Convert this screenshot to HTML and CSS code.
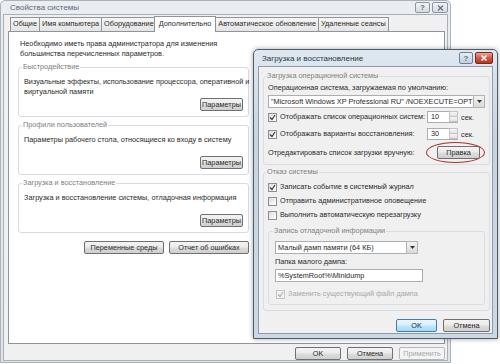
FILE: index.html
```html
<!DOCTYPE html>
<html lang="ru">
<head>
    <meta charset="UTF-8">
    <meta name="viewport" content="width=device-width, initial-scale=1.0">
    <title>Свойства системы</title>
    <link rel="stylesheet" href="styles.css">
</head>
<body>
<div class="desktop">

    <!-- main dialog -->
    <div class="window sysprops">
        <div class="titlebar">
            <span class="title">Свойства системы</span>
            <div class="caption">
                <span class="cap-btn">?</span>
                <span class="cap-btn cap-wide">
                    <svg width="7" height="6" viewBox="0 0 7 6"><path d="M1 0.5 L6 5.5 M6 0.5 L1 5.5" stroke="#66707a" stroke-width="1.2"/></svg>
                </span>
            </div>
        </div>
        <div class="client">
            <div class="tabs">
                <span class="tab">Общие</span>
                <span class="tab">Имя компьютера</span>
                <span class="tab">Оборудование</span>
                <span class="tab active">Дополнительно</span>
                <span class="tab">Автоматическое обновление</span>
                <span class="tab">Удаленные сеансы</span>
            </div>
            <div class="tab-panel">
                <p class="intro">Необходимо иметь права администратора для изменения<br>большинства перечисленных параметров.</p>

                <fieldset class="group">
                    <legend>Быстродействие</legend>
                    <div class="group-body">
                        <p>Визуальные эффекты, использование процессора, оперативной и<br>виртуальной памяти</p>
                        <button class="btn">Параметры</button>
                    </div>
                </fieldset>

                <fieldset class="group">
                    <legend>Профили пользователей</legend>
                    <div class="group-body">
                        <p>Параметры рабочего стола, относящиеся ко входу в систему</p>
                        <button class="btn">Параметры</button>
                    </div>
                </fieldset>

                <fieldset class="group">
                    <legend>Загрузка и восстановление</legend>
                    <div class="group-body">
                        <p>Загрузка и восстановление системы, отладочная информация</p>
                        <button class="btn">Параметры</button>
                    </div>
                </fieldset>

                <div class="panel-buttons">
                    <button class="btn btn-wide">Переменные среды</button>
                    <button class="btn btn-wide">Отчет об ошибках</button>
                </div>
            </div>
            <div class="dialog-buttons">
                <button class="btn">OK</button>
                <button class="btn">Отмена</button>
                <button class="btn" disabled>Применить</button>
            </div>
        </div>
    </div>

    <!-- startup and recovery dialog -->
    <div class="window startup">
        <div class="titlebar">
            <span class="title">Загрузка и восстановление</span>
            <div class="caption">
                <span class="cap-btn cap-help">?</span>
                <span class="cap-btn cap-close">
                    <svg width="8" height="6" viewBox="0 0 8 6"><path d="M1.5 0.5 L6.5 5.5 M6.5 0.5 L1.5 5.5" stroke="#fff" stroke-width="1.5"/></svg>
                </span>
            </div>
        </div>
        <div class="client">
            <fieldset class="box">
                <legend>Загрузка операционной системы</legend>
                <div class="field-label">Операционная система, загружаемая по умолчанию:</div>
                <div class="select">
                    <span class="val">"Microsoft Windows XP Professional RU" /NOEXECUTE=OPTIN /FASTDETECT</span>
                    <span class="drop"><svg width="5" height="3" viewBox="0 0 5 3"><path d="M0 0 H5 L2.5 3 Z" fill="#333"/></svg></span>
                </div>
                <div class="opt-row first">
                    <label class="check"><span class="cb"><svg width="7" height="7" viewBox="0 0 7 7"><path d="M1 3.5 L3 5.5 L6 1" fill="none" stroke="#3a3a3a" stroke-width="1.2"/></svg></span>Отображать список операционных систем:</label>
                    <span class="spin"><span class="num">10</span><span class="arrows"><i></i><i class="down"></i></span></span>
                    <span class="unit">сек.</span>
                </div>
                <div class="opt-row">
                    <label class="check"><span class="cb"><svg width="7" height="7" viewBox="0 0 7 7"><path d="M1 3.5 L3 5.5 L6 1" fill="none" stroke="#3a3a3a" stroke-width="1.2"/></svg></span>Отображать варианты восстановления:</label>
                    <span class="spin"><span class="num">30</span><span class="arrows"><i></i><i class="down"></i></span></span>
                    <span class="unit">сек.</span>
                </div>
                <div class="opt-row edit-row">
                    <span>Отредактировать список загрузки вручную:</span>
                    <span class="marked"><button class="btn">Правка</button></span>
                </div>
            </fieldset>

            <fieldset class="box failure">
                <legend>Отказ системы</legend>
                <label class="check line"><span class="cb"><svg width="7" height="7" viewBox="0 0 7 7"><path d="M1 3.5 L3 5.5 L6 1" fill="none" stroke="#3a3a3a" stroke-width="1.2"/></svg></span>Записать событие в системный журнал</label>
                <label class="check line"><span class="cb"></span>Отправить административное оповещение</label>
                <label class="check line"><span class="cb"></span>Выполнить автоматическую перезагрузку</label>

                <fieldset class="box debug">
                    <legend>Запись отладочной информации</legend>
                    <div class="select small">
                        <span class="val">Малый дамп памяти (64 КБ)</span>
                        <span class="drop"><svg width="5" height="3" viewBox="0 0 5 3"><path d="M0 0 H5 L2.5 3 Z" fill="#333"/></svg></span>
                    </div>
                    <div class="field-label">Папка малого дампа:</div>
                    <div class="textbox">%SystemRoot%\Minidump</div>
                    <label class="check line disabled"><span class="cb"><svg width="7" height="7" viewBox="0 0 7 7"><path d="M1 3.5 L3 5.5 L6 1" fill="none" stroke="#b0b0b0" stroke-width="1.2"/></svg></span>Заменить существующий файл дампа</label>
                </fieldset>
            </fieldset>

            <div class="dialog-buttons">
                <button class="btn btn-default">OK</button>
                <button class="btn">Отмена</button>
            </div>
        </div>
    </div>

</div>
</body>
</html>
```

FILE: styles.css
```css
body {
    margin: 0;
    background: #fff;
    font-family: "Liberation Sans", Arial, sans-serif;
    font-size: 7.3px;
    color: #2a2a2a;
}

.desktop {
    position: relative;
    width: 500px;
    height: 364px;
    overflow: hidden;
}

p {
    margin: 0;
    line-height: 10px;
}

/* window chrome */

.window {
    box-sizing: border-box;
    display: flex;
    flex-direction: column;
}

.titlebar {
    display: flex;
    align-items: center;
    justify-content: space-between;
}

.caption {
    display: flex;
    gap: 2px;
}

.cap-btn {
    display: flex;
    align-items: center;
    justify-content: center;
    box-sizing: border-box;
    width: 15px;
    height: 11px;
    border: 1px solid #8d96a0;
    border-radius: 2px;
    background: linear-gradient(#f1f3f6, #d5dbe1);
    color: #66707a;
    font-size: 8px;
    font-weight: bold;
}

.cap-wide {
    width: 16px;
}

.sysprops {
    width: 451px;
    height: 363px;
    border: 1px solid #aab2ba;
    border-radius: 5px 5px 0 0;
    background: linear-gradient(#eaedf1, #e0e4e9);
    padding: 0 2px 1px;
}

.sysprops .titlebar {
    height: 13px;
    padding-left: 7px;
}

.sysprops .title {
    font-size: 8px;
    color: #5b6b7c;
}

.sysprops .client {
    flex: 1;
    background: #f0f0f0;
    border: 1px solid #a8b0b8;
    padding: 2px 2px 0 4px;
}

/* tabs */

.tabs {
    display: flex;
    align-items: flex-end;
    height: 14px;
    padding-left: 2px;
}

.tab {
    box-sizing: border-box;
    height: 14px;
    padding: 0 2px;
    line-height: 12px;
    border: 1px solid #8e9499;
    border-bottom: none;
    margin-right: -1px;
    background: linear-gradient(#f6f6f6, #e4e4e4);
    white-space: nowrap;
}

.tab.active {
    position: relative;
    z-index: 1;
    height: 16px;
    margin: 0 -1px -1px -2px;
    padding: 0 4px;
    background: #fff;
    line-height: 13px;
}

.tab-panel {
    box-sizing: border-box;
    height: 313px;
    border: 1px solid #8e9499;
    background: #fff;
    padding: 7px 0 0 9px;
}

.intro {
    margin: 0 0 3px 2px;
}

.group {
    box-sizing: border-box;
    width: 231px;
    min-width: 0;
    margin: 0 0 3px;
    padding: 0 5px 5px 5px;
    border: 1px solid #d5dbe1;
    border-radius: 3px;
}

.group legend,
.box legend {
    padding: 0 1px;
    margin-left: -2px;
    line-height: 10px;
    color: #808080;
}

.group-body {
    display: flex;
    flex-direction: column;
    height: 34px;
    padding-top: 5px;
}

.group-body p {
    white-space: nowrap;
}

.group-body .btn {
    align-self: flex-end;
    margin-top: auto;
}

.panel-buttons {
    display: flex;
    justify-content: flex-end;
    gap: 5px;
    width: 231px;
    margin-top: 8px;
}

.dialog-buttons {
    display: flex;
    justify-content: flex-end;
    gap: 6px;
    margin-top: 3px;
}

/* buttons */

.btn {
    box-sizing: border-box;
    width: 46px;
    height: 13px;
    padding: 0;
    border: 1px solid #707070;
    border-radius: 2px;
    background: linear-gradient(#f3f3f3 0%, #ebebeb 48%, #dddddd 52%, #cfcfcf 100%);
    font: inherit;
    color: #2a2a2a;
    line-height: 11px;
}

.group-body .btn {
    width: 43px;
}

.btn-wide {
    width: 80px;
}

.btn:disabled {
    border-color: #b5b9bc;
    background: #f4f4f4;
    color: #a8a8a8;
}

.btn-default {
    border-color: #3c7fb1;
    background: linear-gradient(#eaf6fd 0%, #d9f0fc 48%, #bee6fd 52%, #a7d9f5 100%);
}

/* startup and recovery dialog */

.startup {
    position: absolute;
    left: 253px;
    top: 49px;
    width: 245px;
    height: 290px;
    border: 1px solid #4e5b69;
    border-radius: 5px 5px 0 0;
    background: linear-gradient(#dfe8f1, #c6d4e2 30%, #ccd9e5);
    padding: 0 4px 4px;
    box-shadow: 0 0 5px rgba(0, 0, 0, 0.35);
}

.startup .titlebar {
    height: 16px;
    padding-left: 4px;
}

.startup .title {
    font-size: 8px;
    color: #2c3640;
}

.cap-help {
    width: 14px;
    height: 12px;
    border-color: #6f8294;
    background: linear-gradient(#e6eef6, #bfcfdf);
}

.cap-close {
    width: 18px;
    height: 12px;
    border-color: #7a2a1e;
    background: linear-gradient(#eaa796, #cf5a43 50%, #b8321c);
}

.startup .client {
    flex: 1;
    background: #f0f0f0;
    border: 1px solid #8d9cab;
    padding: 4px 2px 0 4px;
    overflow: hidden;
}

.box {
    min-width: 0;
    margin: 0;
    padding: 0 4px 6px 4px;
    border: 1px solid #d8dde2;
    border-radius: 3px;
}

.field-label {
    margin-top: 2px;
    line-height: 10px;
}

.select {
    display: flex;
    box-sizing: border-box;
    height: 13px;
    margin-top: 2px;
    border: 1px solid #abadb3;
    background: #fff;
}

.select .val {
    flex: 1;
    min-width: 0;
    padding-left: 2px;
    line-height: 11px;
    white-space: nowrap;
    overflow: hidden;
}

.select .drop {
    display: flex;
    align-items: center;
    justify-content: center;
    width: 10px;
    border: 1px solid #b4b4b4;
    margin: -1px -1px -1px 0;
    background: linear-gradient(#f3f3f3, #d9d9d9);
}

.check {
    display: flex;
    align-items: center;
    gap: 3px;
    line-height: 10px;
    white-space: nowrap;
}

.cb {
    display: flex;
    align-items: center;
    justify-content: center;
    box-sizing: border-box;
    width: 9px;
    height: 9px;
    border: 1px solid #8f8f8f;
    background: linear-gradient(135deg, #dcdcdc, #fff);
}

.opt-row {
    display: flex;
    align-items: center;
    height: 12px;
    margin-top: 5px;
}

.opt-row.first {
    margin-top: 3px;
}

.opt-row .check {
    width: 159px;
}

.spin {
    display: flex;
    box-sizing: border-box;
    width: 31px;
    height: 12px;
    border: 1px solid #abadb3;
    background: #fff;
}

.spin .num {
    flex: 1;
    padding-left: 3px;
    line-height: 10px;
}

.spin .arrows {
    display: flex;
    flex-direction: column;
    width: 8px;
}

.spin .arrows i {
    flex: 1;
    border: 1px solid #c4c4c4;
    background: linear-gradient(#f6f6f6, #e2e2e2);
    margin: -1px -1px 0 0;
}

.unit {
    margin-left: 3px;
}

.edit-row {
    justify-content: space-between;
    margin-top: 6px;
    padding-right: 5px;
}

.edit-row .btn {
    width: 43px;
}

.marked {
    position: relative;
    display: flex;
}

.marked::after {
    content: "";
    position: absolute;
    top: -4px;
    bottom: -4px;
    left: -11px;
    right: -5px;
    border: 1px solid #a8322f;
    border-radius: 50%;
}

.failure {
    margin-top: 2px;
    padding-bottom: 5px;
}

.line {
    margin-top: 4px;
}

.failure > .line:first-of-type {
    margin-top: 5px;
}

.debug {
    margin-top: 6px;
    padding: 0 5px 5px 6px;
}

.select.small {
    width: 143px;
    margin-top: 5px;
}

.debug .field-label {
    margin-top: 3px;
}

.textbox {
    box-sizing: border-box;
    width: 148px;
    height: 13px;
    margin-top: 2px;
    padding-left: 2px;
    border: 1px solid #abadb3;
    background: #fff;
    line-height: 11px;
}

.check.disabled {
    margin-top: 7px;
    margin-left: 1px;
    color: #a9a9a9;
}

.check.disabled .cb {
    border-color: #c5c5c5;
    background: #f4f4f4;
}

.startup .dialog-buttons {
    margin-top: 8px;
}

.startup .dialog-buttons .btn:first-child {
    width: 41px;
}

.startup .dialog-buttons .btn:last-child {
    width: 47px;
}
```
